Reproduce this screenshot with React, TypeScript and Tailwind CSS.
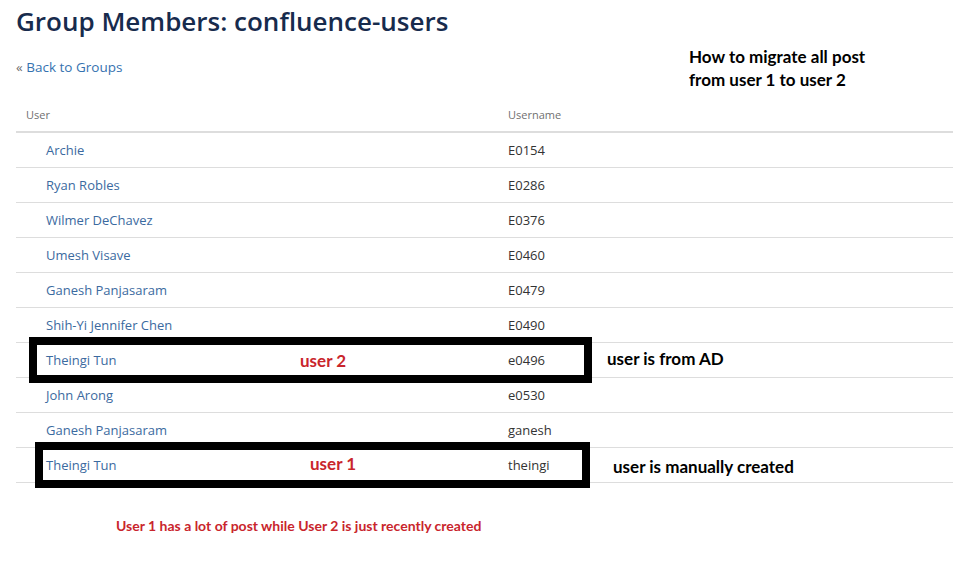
import React from "react";

const members = [
  { name: "Archie", username: "E0154" },
  { name: "Ryan Robles", username: "E0286" },
  { name: "Wilmer DeChavez", username: "E0376" },
  { name: "Umesh Visave", username: "E0460" },
  { name: "Ganesh Panjasaram", username: "E0479" },
  { name: "Shih-Yi Jennifer Chen", username: "E0490" },
  { name: "Theingi Tun", username: "e0496" },
  { name: "John Arong", username: "e0530" },
  { name: "Ganesh Panjasaram", username: "ganesh" },
  { name: "Theingi Tun", username: "theingi" },
];

const note = "font-['Lato',sans-serif] font-bold";

const App: React.FC = () => {
  return (
    <div className="relative h-[567px] w-[953px] overflow-hidden bg-white font-['Open_Sans',sans-serif]">
      <div className="pl-4">
        <div className="flex h-[77px] items-start">
          <div className="w-[673px]">
            <h1 className="mt-[5px] text-[26px] leading-[32px] font-semibold text-[#172b4d]">
              Group Members: confluence-users
            </h1>
            <div className="mt-[20px] text-[13.5px] leading-[20px] text-[#3572b0]">
              <span className="text-[#707070]">«</span> Back to Groups
            </div>
          </div>
          <div className={`mt-[45px] text-[17px] leading-[23px] text-black ${note}`}>
            How to migrate all post
            <br />
            from user 1 to user 2
          </div>
        </div>
        <table className="mt-[20px] w-[937px] border-collapse text-[13px]">
          <thead>
            <tr className="h-[35px] border-b-2 border-[#dddddd] text-left text-[11px] text-[#707070]">
              <th className="w-[482px] pt-[2px] pl-[10px] font-normal">User</th>
              <th className="pt-[2px] pl-[10px] font-normal">Username</th>
            </tr>
          </thead>
          <tbody>
            {members.map((m, i) => (
              <tr key={i} className="h-[35px] border-b border-[#dddddd]">
                <td className="pt-[2px] pl-[30px] text-[#3b6aa0]">{m.name}</td>
                <td className="pt-[2px] pl-[10px] text-[#333333]">{m.username}</td>
              </tr>
            ))}
          </tbody>
        </table>
        <div className={`mt-[32px] pl-[100px] text-[14px] text-[#c9252c] ${note}`}>
          User 1 has a lot of post while User 2 is just recently created
        </div>
      </div>

      {/* highlight boxes and labels drawn over the table */}
      <div className="absolute left-[29px] top-[337px] h-[46px] w-[563px] border-[8px] border-black" />
      <div className="absolute left-[35px] top-[442px] h-[46px] w-[555px] border-[8px] border-black" />

      <div className={`absolute left-[300px] top-[348px] text-[17px] text-[#c9252c] ${note}`}>user 2</div>
      <div className={`absolute left-[310px] top-[451px] text-[17px] text-[#c9252c] ${note}`}>user 1</div>
      <div className={`absolute left-[607px] top-[346px] text-[17px] text-black ${note}`}>user is from AD</div>
      <div className={`absolute left-[613px] top-[454px] text-[17px] text-black ${note}`}>user is manually created</div>
    </div>
  );
};

export default App;
